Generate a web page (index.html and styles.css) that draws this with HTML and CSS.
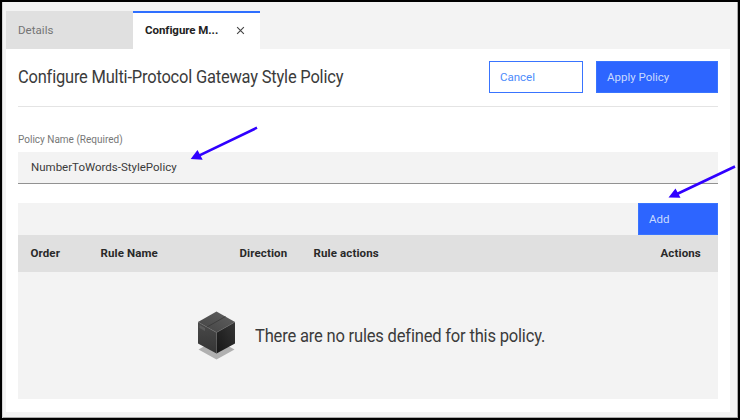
FILE: index.html
```
<!DOCTYPE html>
<html lang="en">
<head>
<meta charset="utf-8">
<title>Configure Multi-Protocol Gateway Style Policy</title>
<link rel="stylesheet" href="styles.css">
</head>
<body>
<div class="frame">
  <nav class="tabs">
    <div class="tab"><span class="t-details">Details</span></div>
    <div class="tab active"><span class="t-conf">Configure M...</span>
      <svg class="close" viewBox="0 0 8 8"><path d="M1 1 7 7M7 1 1 7"/></svg>
    </div>
  </nav>
  <main class="panel">
    <header class="head">
      <h1>Configure Multi-Protocol Gateway Style Policy</h1>
      <button class="btn cancel">Cancel</button>
      <button class="btn apply">Apply Policy</button>
    </header>
    <div class="label"><span>Policy Name (Required)</span></div>
    <div class="field"><span>NumberToWords-StylePolicy</span></div>
    <section class="rules">
      <div class="toolbar"><button class="btn add">Add</button></div>
      <div class="columns">
        <span>Order</span>
        <span>Rule Name</span>
        <span>Direction</span>
        <span>Rule actions</span>
        <span>Actions</span>
      </div>
      <div class="empty">
        <svg class="cube" viewBox="0 0 40 50">
          <defs>
            <linearGradient id="top" x1="0" y1="1" x2="1" y2="0"><stop offset="0" stop-color="#434343"/><stop offset="1" stop-color="#606060"/></linearGradient>
            <linearGradient id="left" x1="0" y1="0" x2="0" y2="1"><stop offset="0" stop-color="#4a4a4a"/><stop offset="1" stop-color="#343434"/></linearGradient>
            <linearGradient id="right" x1="0" y1="1" x2="1" y2="0"><stop offset="0" stop-color="#161616"/><stop offset="1" stop-color="#363636"/></linearGradient>
          </defs>
          <path fill="#b0b0b0" d="M1.5 38.500 19.500 28.500 37.500 38.500 19.500 48.500z"/>
          <path fill="url(#top)" d="M1 11 19.500 .5 38 11 19.500 21.500z"/>
          <path fill="url(#left)" d="M1 11 19.500 21.500V42.500L1 32.500z"/>
          <path fill="url(#right)" d="M38 11 19.500 21.500V42.500L38 32.500z"/>
          <path fill="none" stroke="#6b6b6b" stroke-width=".5" d="M1 11 19.500 21.500 38 11M19.500 21.500V42.500"/>
          <path fill="none" stroke="#333" stroke-width=".7" d="M10 16 28.500 5.500"/>
          <path fill="#5c5c5c" d="M2.500 14 8 17V20L2.500 17z"/>
        </svg>
        <span class="empty-text">There are no rules defined for this policy.</span>
      </div>
    </section>
  </main>
  <svg class="arrows" viewBox="0 0 740 420">
    <path class="shaft" d="M257 127.700 199 155.700M735 166.500 677 194"/>
    <path class="tip" d="M190.700 159 197.500 150 202.700 159.700zM668.500 197.500 675.500 188.500 680.500 197.800z"/>
  </svg>
</div>
</body>
</html>
```
FILE: styles.css
```
* { box-sizing: border-box; }
body { margin: 0; }
.frame {
  position: relative;
  width: 740px;
  height: 420px;
  padding: 9px 8px 0 4px;
  border: 2px solid #000;
  background: #f3f3f3;
  box-shadow: inset 1px 0 #d5d5d5, inset -1px -1px #aaa;
  font-family: Roboto, "Open Sans", sans-serif;
  font-size: 11.5px;
  color: #3b3b3b;
  overflow: hidden;
}
span, h1 { white-space: nowrap; }
.tabs { display: flex; height: 38px; }
.tab {
  display: flex;
  align-items: center;
  width: 127px;
  padding-left: 12px;
  background: #e0e0e0;
  color: #747474;
}
.tab.active {
  background: #fff;
  border-top: 2px solid #2f6fff;
  color: #222;
  font-weight: 700;
  padding-bottom: 2px;
}
.t-details { letter-spacing: .05px; }
.t-conf { width: 91px; letter-spacing: -.05px; }
.close { width: 9px; height: 9px; fill: none; stroke: #444; stroke-width: 1; }
.panel { width: 724px; height: 363px; padding: 0 12px; background: #fff; }
.head {
  display: flex;
  align-items: center;
  height: 58px;
  padding-bottom: 1px;
  border-bottom: 1px solid #e4e4e4;
}
h1 {
  flex: 1;
  margin: 0;
  font-size: 17.5px;
  font-weight: 400;
  letter-spacing: -.2px;
  transform: scaleX(.94);
  transform-origin: left;
}
.btn {
  height: 32px;
  padding: 0 10px 1px;
  border: 1px solid #3974ff;
  background: #2d65ff;
  color: #c9dafe;
  font: inherit;
  text-align: left;
}
.cancel { width: 94px; margin-right: 13px; background: #fff; color: #4c8bfb; }
.apply { width: 122px; }
.label { display: flex; align-items: center; height: 45px; padding-top: 20px; font-size: 10px; color: #777; }
.field {
  display: flex;
  align-items: center;
  height: 32px;
  padding: 0 0 2px 13px;
  border-bottom: 1px solid #929292;
  background: #f3f3f3;
}
.rules { margin-top: 19px; height: 196px; background: #f3f3f3; }
.toolbar { display: flex; justify-content: flex-end; height: 32px; }
.add { width: 80px; }
.columns {
  display: grid;
  grid-template-columns: 70px 139px 74px 347px 1fr;
  align-items: center;
  height: 37px;
  padding: 0 0 1px 12.5px;
  background: #e0e0e0;
  font-weight: 700;
  letter-spacing: .12px;
  color: #292929;
}
.empty { display: flex; align-items: center; height: 128px; padding-left: 179px; }
.cube { width: 40px; height: 50px; }
.empty-text {
  margin-left: 18px;
  font-size: 17.5px;
  letter-spacing: -.2px;
  transform: scaleX(.945);
  transform-origin: left;
}
.arrows { position: absolute; left: -2px; top: -2px; width: 740px; height: 420px; pointer-events: none; }
.shaft { fill: none; stroke: #3000ff; stroke-width: 2.6; }
.tip { fill: #3000ff; }
```
